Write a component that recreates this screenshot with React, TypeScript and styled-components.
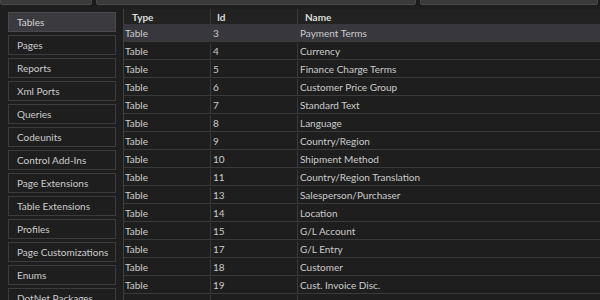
import styled, { createGlobalStyle } from "styled-components";

type ObjectRow = {
  type: string;
  id: number;
  name: string;
};

const GlobalStyle = createGlobalStyle`
  html, body {
    margin: 0;
    padding: 0;
    background: #1e1e1e;
    overflow: hidden;
  }
  body {
    font-family: "Segoe UI", Lato, "Noto Sans", sans-serif;
    color: #cccccc;
  }
`;

const Page = styled.div`
  width: 600px;
  height: 300px;
  background: #1e1e1e;
  display: flex;
  flex-direction: column;
  overflow: hidden;
`;

const TopBar = styled.div`
  height: 5px;
  display: flex;
  align-items: flex-end;
  gap: 4px;
  overflow: hidden;
  background: #1b1b1b;
`;

const TopButton = styled.div<{ $width: number }>`
  flex: 0 0 ${(p) => p.$width}px;
  height: 22px;
  box-sizing: border-box;
  background: #3a3a3a;
  border: 1px solid #4a4a4a;
  border-radius: 2px;
`;

const Body = styled.div`
  flex: 1;
  display: flex;
  padding-top: 4px;
  min-height: 0;
`;

const Sidebar = styled.div`
  flex: 0 0 123px;
  box-sizing: border-box;
  padding: 3px 7px 0 8px;
  display: flex;
  flex-direction: column;
  gap: 3px;
`;

const NavButton = styled.div<{ $active?: boolean }>`
  flex: 0 0 20px;
  box-sizing: border-box;
  display: flex;
  align-items: center;
  padding-left: 8px;
  font-size: 10px;
  color: ${(p) => (p.$active ? "#d4d4d4" : "#cccccc")};
  background: ${(p) => (p.$active ? "#3a3a3f" : "#1e1e1e")};
  border: 1px solid ${(p) => (p.$active ? "#4a4a4f" : "#3c3c3c")};
  white-space: nowrap;
`;

const Grid = styled.div`
  flex: 1;
  border-left: 1px solid #3f3f3f;
  display: flex;
  flex-direction: column;
  min-width: 0;
`;

const Row = styled.div<{ $header?: boolean; $selected?: boolean }>`
  display: grid;
  grid-template-columns: 87px 87px 1fr;
  height: ${(p) => (p.$header ? 15 : 18)}px;
  flex: 0 0 auto;
  box-sizing: border-box;
  padding-top: ${(p) => (p.$header ? 0 : 1)}px;
  border-bottom: ${(p) => (p.$header ? "none" : "1px solid #3a3a3a")};
  background: ${(p) =>
    p.$selected ? "#37373d" : p.$header ? "#222222" : "#1e1e1e"};
  font-size: 10px;
  font-weight: ${(p) => (p.$header ? 700 : 400)};
  color: ${(p) => (p.$header ? "#dddddd" : "#cccccc")};
`;

const Cell = styled.div<{ $pad: number }>`
  display: flex;
  align-items: center;
  padding-left: ${(p) => p.$pad}px;
  border-right: 1px solid #3a3a3a;
  white-space: nowrap;
  overflow: hidden;
  &:last-child {
    border-right: none;
  }
`;

const navItems = [
  "Tables",
  "Pages",
  "Reports",
  "Xml Ports",
  "Queries",
  "Codeunits",
  "Control Add-Ins",
  "Page Extensions",
  "Table Extensions",
  "Profiles",
  "Page Customizations",
  "Enums",
  "DotNet Packages",
];

const rows: ObjectRow[] = [
  { type: "Table", id: 3, name: "Payment Terms" },
  { type: "Table", id: 4, name: "Currency" },
  { type: "Table", id: 5, name: "Finance Charge Terms" },
  { type: "Table", id: 6, name: "Customer Price Group" },
  { type: "Table", id: 7, name: "Standard Text" },
  { type: "Table", id: 8, name: "Language" },
  { type: "Table", id: 9, name: "Country/Region" },
  { type: "Table", id: 10, name: "Shipment Method" },
  { type: "Table", id: 11, name: "Country/Region Translation" },
  { type: "Table", id: 13, name: "Salesperson/Purchaser" },
  { type: "Table", id: 14, name: "Location" },
  { type: "Table", id: 15, name: "G/L Account" },
  { type: "Table", id: 17, name: "G/L Entry" },
  { type: "Table", id: 18, name: "Customer" },
  { type: "Table", id: 19, name: "Cust. Invoice Disc." },
  { type: "Table", id: 21, name: "" },
];

export default function App() {
  return (
    <Page>
      <GlobalStyle />
      <TopBar>
        <TopButton $width={92} />
        <TopButton $width={320} />
        <TopButton $width={178} />
      </TopBar>
      <Body>
        <Sidebar>
          {navItems.map((item, i) => (
            <NavButton key={item} $active={i === 0}>
              {item}
            </NavButton>
          ))}
        </Sidebar>
        <Grid>
          <Row $header>
            <Cell $pad={8}>Type</Cell>
            <Cell $pad={6}>Id</Cell>
            <Cell $pad={7}>Name</Cell>
          </Row>
          {rows.map((r, i) => (
            <Row key={r.id} $selected={i === 0}>
              <Cell $pad={1}>{r.name ? r.type : ""}</Cell>
              <Cell $pad={2}>{r.name ? r.id : ""}</Cell>
              <Cell $pad={2}>{r.name}</Cell>
            </Row>
          ))}
        </Grid>
      </Body>
    </Page>
  );
}
